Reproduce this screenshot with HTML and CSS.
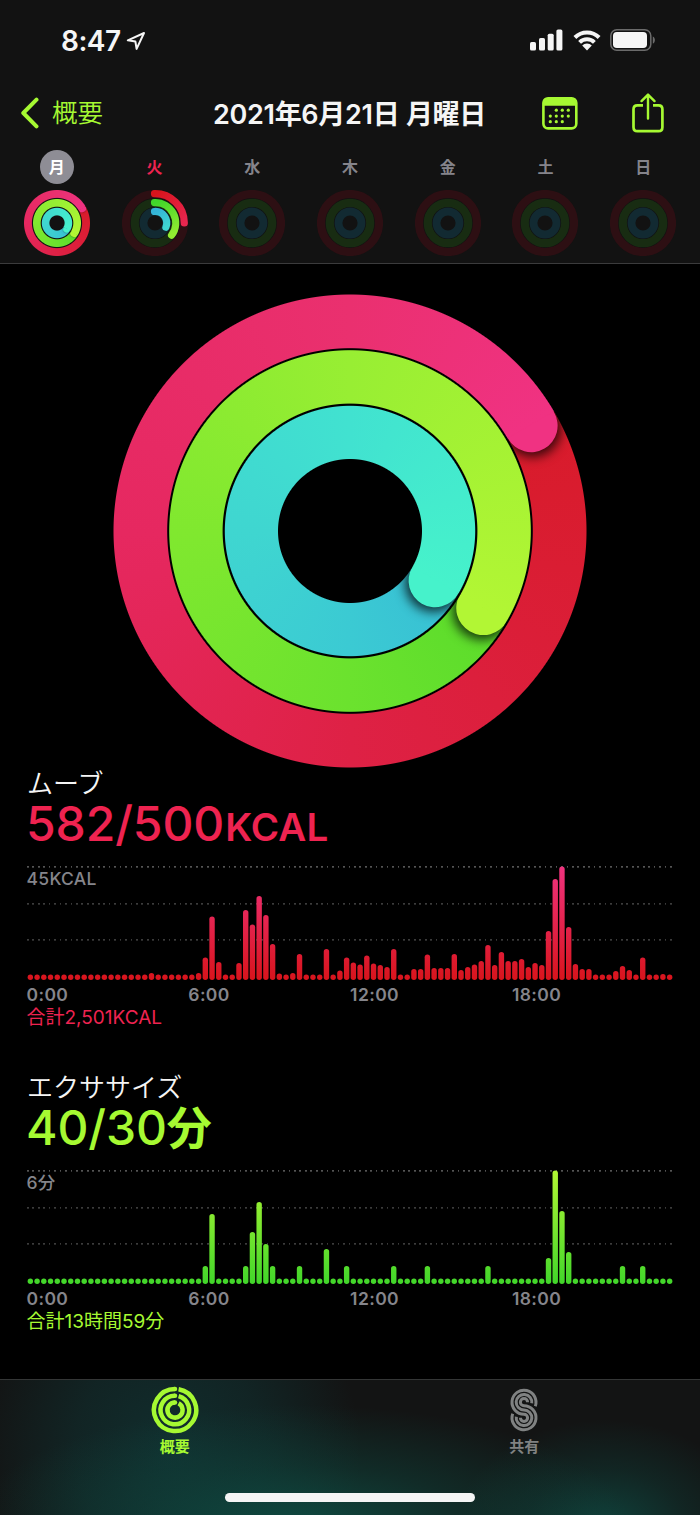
FILE: index.html
```html
<!DOCTYPE html>
<html lang="ja">
  <head>
    <meta charset="UTF-8" />
    <meta name="viewport" content="width=device-width, initial-scale=1.0" />
    <title>アクティビティ</title>
    <link rel="stylesheet" href="styles.css">
  </head>
  <body>
    <header class="header">
      <div class="status-bar">
        <div class="status-time">
          <span>8:47</span>
          <svg width="20" height="20" viewBox="0 0 20 20"><path d="M1.8 9.3 18 2 10.6 17.9 9.4 10.6Z" fill="none" stroke="#f5f5f5" stroke-width="2" stroke-linejoin="round" /></svg>
        </div>
        <div class="status-icons">
          <svg width="33" height="22" viewBox="0 0 33 22" fill="#f5f5f5">
            <rect x="0" y="13" width="6" height="8.5" rx="1.6" />
            <rect x="9" y="9" width="6" height="12.5" rx="1.6" />
            <rect x="17.7" y="4.7" width="6" height="16.8" rx="1.6" />
            <rect x="26.4" y="0.5" width="6" height="21" rx="1.6" />
          </svg>
          <svg class="wifi" width="28" height="22" viewBox="0 0 28 22" fill="none" stroke="#f5f5f5" stroke-width="4">
            <path d="M1.9 8.5A17 17 0 0 1 26.1 8.5" />
            <path d="M6.6 13.3A10.4 10.4 0 0 1 21.4 13.3" />
            <path d="M9.2 16.5A6.8 6.8 0 0 1 18.8 16.5L14 21.4Z" fill="#f5f5f5" stroke="none" />
          </svg>
          <svg width="46" height="22" viewBox="0 0 46 22">
            <rect x="0.8" y="0.8" width="40" height="20.4" rx="6" fill="none" stroke="#6b6b6b" stroke-width="1.5" />
            <rect x="3" y="3" width="34" height="16" rx="3.8" fill="#f5f5f5" />
            <path d="M42.8 7.4C45.6 8.4 45.6 13.6 42.8 14.6Z" fill="#6b6b6b" />
          </svg>
        </div>
      </div>

      <nav class="nav">
        <a class="back">
          <svg width="19" height="32" viewBox="0 0 19 32"><path d="M16.5 2.7 3.3 16 16.5 29.3" fill="none" stroke="#a6f932" stroke-width="4" stroke-linecap="round" stroke-linejoin="round" /></svg>
          <span>概要</span>
        </a>
        <h1>2021年6月21日 月曜日</h1>
        <div class="nav-actions">
          <svg width="36" height="33" viewBox="0 0 36 33" fill="#a6f932">
            <rect x="1.4" y="1.4" width="32.9" height="30" rx="4.6" fill="none" stroke="#a6f932" stroke-width="2.6" />
            <path d="M1 8.8V5Q1 1 5 1H30.7Q34.7 1 34.7 5V8.8Z" />
            <g id="calendarDots"></g>
          </svg>
          <svg width="32" height="40" viewBox="0 0 32 40" fill="none" stroke="#a6f932" stroke-width="2.7" stroke-linecap="round" stroke-linejoin="round">
            <path d="M11 12.3H5.4Q1.5 12.3 1.5 16.2V34.3Q1.5 38.2 5.4 38.2H26.5Q30.4 38.2 30.4 34.3V16.2Q30.4 12.3 26.5 12.3H21" stroke-linecap="butt" />
            <path d="M16 25.5V1.8M9.5 8.1 16 1.6 22.5 8.1" stroke-width="2.4" />
          </svg>
        </div>
      </nav>

      <div class="week">
        <div class="day selected">
          <span class="day-name">月</span>
          <div class="rings rings-small">
            <div class="ring ring-move"><div class="cap"></div></div>
            <div class="ring ring-exercise"><div class="cap"></div></div>
            <div class="ring ring-stand"><div class="cap"></div></div>
          </div>
        </div>
        <div class="day today">
          <span class="day-name">火</span>
          <svg class="day-rings" viewBox="-33 -33 66 66">
            <defs>
              <linearGradient id="moveArc" gradientUnits="userSpaceOnUse" x1="0" y1="-29" x2="29" y2="0"><stop offset="0" stop-color="#d8141c" /><stop offset="1" stop-color="#e8264f" /></linearGradient>
              <linearGradient id="exerciseArc" gradientUnits="userSpaceOnUse" x1="0" y1="-20" x2="16" y2="12"><stop offset="0" stop-color="#41d62a" /><stop offset="1" stop-color="#93ec31" /></linearGradient>
              <linearGradient id="standArc" gradientUnits="userSpaceOnUse" x1="0" y1="-11" x2="11" y2="4"><stop offset="0" stop-color="#34b4d8" /><stop offset="1" stop-color="#3fd5d2" /></linearGradient>
            </defs>
            <use href="#tracks" />
            <g fill="none" stroke-width="7.2" stroke-linecap="round">
              <path d="M-.5-29.3A29.3 29.3 0 0 1 29.3 0" stroke="url(#moveArc)" />
              <path d="M-.5-20.3A20.3 20.3 0 0 1 16.6 12.2" stroke="url(#exerciseArc)" />
              <path d="M-.5-11.5A11.5 11.5 0 0 1 10.9 4.2" stroke="url(#standArc)" />
            </g>
          </svg>
        </div>
        <div class="day"><span class="day-name">水</span>
          <svg class="day-rings" viewBox="-33 -33 66 66">
            <g id="tracks" fill="none">
              <circle r="29" stroke="#2d0f13" stroke-width="8.2" />
              <circle r="20.2" stroke="#182c12" stroke-width="8.2" />
              <circle r="11.5" stroke="#122a32" stroke-width="7.8" />
            </g>
          </svg>
        </div>
        <div class="day"><span class="day-name">木</span><svg class="day-rings" viewBox="-33 -33 66 66"><use href="#tracks" /></svg></div>
        <div class="day"><span class="day-name">金</span><svg class="day-rings" viewBox="-33 -33 66 66"><use href="#tracks" /></svg></div>
        <div class="day"><span class="day-name">土</span><svg class="day-rings" viewBox="-33 -33 66 66"><use href="#tracks" /></svg></div>
        <div class="day"><span class="day-name">日</span><svg class="day-rings" viewBox="-33 -33 66 66"><use href="#tracks" /></svg></div>
      </div>
    </header>

    <main class="content">
      <div class="rings rings-large">
        <div class="ring ring-move"><div class="cap"></div></div>
        <div class="ring ring-exercise"><div class="cap"></div></div>
        <div class="ring ring-stand"><div class="cap"></div></div>
        <svg class="arrows" viewBox="-237 -237 474 474" fill="none" stroke="#060606" stroke-width="4.6" stroke-linecap="round" stroke-linejoin="round">
          <path d="M-13-209.8H13M-.5-225.6 13.3-209.8-.5-194" />
          <path d="M-16.7-154.3H9M-4.5-169.7 9.5-154.3-4.5-139M5.3-169.7 19-154.3 5.3-139" />
          <path d="M0-86V-111M-15.5-98.2 0-111.5 15.5-98.2" />
        </svg>
      </div>

      <section class="metric move">
        <h2>ムーブ</h2>
        <p class="value">582/500<span class="unit">KCAL</span></p>
        <div class="chart">
          <span class="chart-max">45KCAL</span>
          <svg class="bars" viewBox="0 0 646 114">
            <defs>
              <linearGradient id="moveFill" gradientUnits="userSpaceOnUse" x1="0" y1="114" x2="0" y2="0"><stop offset="0" stop-color="#d8141c" /><stop offset="1" stop-color="#f0337f" /></linearGradient>
            </defs>
            <g id="moveBars" fill="url(#moveFill)"></g>
          </svg>
        </div>
        <div class="axis"><span>0:00</span><span>6:00</span><span>12:00</span><span>18:00</span></div>
        <p class="total">合計2,501KCAL</p>
      </section>

      <section class="metric exercise">
        <h2>エクササイズ</h2>
        <p class="value">40/30<span class="unit">分</span></p>
        <div class="chart">
          <span class="chart-max">6分</span>
          <svg class="bars" viewBox="0 0 646 114">
            <defs>
              <linearGradient id="exerciseFill" gradientUnits="userSpaceOnUse" x1="0" y1="114" x2="0" y2="0"><stop offset="0" stop-color="#41d62a" /><stop offset="1" stop-color="#b2f634" /></linearGradient>
            </defs>
            <g id="exerciseBars" fill="url(#exerciseFill)"></g>
          </svg>
        </div>
        <div class="axis"><span>0:00</span><span>6:00</span><span>12:00</span><span>18:00</span></div>
        <p class="total">合計13時間59分</p>
      </section>
    </main>

    <footer class="tab-bar">
      <div class="tabs">
        <a class="tab active">
          <svg width="48" height="48" viewBox="-24 -24 48 48">
            <g fill="none" stroke="#a6f932" stroke-width="4.5">
              <path d="M3.6-20.8A21.1 21.1 0 1 1 0-21.1" />
              <path d="M3.6-13.8A14.3 14.3 0 1 1 0-14.3" />
              <path d="M3.6-6.7A7.6 7.6 0 1 1 0-7.6" />
            </g>
            <g fill="#a6f932">
              <circle cy="-21.1" r="2.25" />
              <circle cy="-14.3" r="2.25" />
              <circle cy="-7.6" r="2.25" />
            </g>
          </svg>
          <span>概要</span>
        </a>
        <a class="tab">
          <svg width="48" height="48" viewBox="-24 -24 48 48" fill="none" stroke="#808282" stroke-width="3">
            <path d="M11.28-3.7A12 12 0 1 0 0 4.2A3.6 3.6 0 1 1-3.6 7.8" />
            <path d="M7.72-6.71A7.8 7.8 0 1 0 0 0A7.8 7.8 0 1 1-7.72 6.71" />
            <path d="M3.6-7.8A3.6 3.6 0 1 0 0-4.2A12 12 0 1 1-11.28 3.7" />
          </svg>
          <span>共有</span>
        </a>
      </div>
      <div class="home-indicator"></div>
    </footer>

    <script>
      // one value per 15 minutes, bar height in px
      const move = [
        5, 5, 5, 5, 5, 5, 5, 5, 5, 5, 5, 5, 5, 5, 5, 5, 5, 5, 7, 5, 5, 5, 5, 5,
        5, 7, 22.5, 63.5, 18, 5, 5, 17, 70, 55.5, 84, 65, 36, 6.5, 5, 7, 26, 5, 5, 5, 31, 5, 9.5, 22.5,
        17.5, 15.5, 24.5, 16.5, 15, 13, 31, 5, 5, 11, 11, 25.5, 12, 12, 12, 26, 10, 13, 15.5, 19, 35, 15, 28, 19,
        19, 21, 13, 17, 15, 49, 101, 113.5, 53, 16, 11, 11, 5, 5, 5, 9, 14, 10, 5, 22.5, 5, 5, 6, 5,
      ];
      const exercise = {
        26: 18, 27: 70, 32: 18, 33: 52, 34: 82, 35: 40, 36: 18, 40: 18, 44: 35, 47: 18,
        54: 18, 59: 18, 68: 18, 77: 26, 78: 113.5, 79: 73, 80: 32, 88: 18, 91: 18,
      };

      function drawBars(id, data) {
        const step = 646 / 96;
        let html = "";
        for (let i = 0; i < 96; i++) {
          const h = Math.max(data[i] || 0, 5.4);
          const x = (step * (i + 0.5) - 2.7).toFixed(2);
          html += `<rect x="${x}" y="${114 - h}" width="5.4" height="${h}" rx="2.7" />`;
        }
        document.getElementById(id).innerHTML = html;
      }

      drawBars("moveBars", move);
      drawBars("exerciseBars", exercise);

      const dots = [[14.3, 13.2], [20.3, 13.2], [26.3, 13.2], [8.3, 19.1], [14.3, 19.1], [20.3, 19.1], [26.3, 19.1], [8.3, 24.7], [14.3, 24.7], [20.3, 24.7]];
      document.getElementById("calendarDots").innerHTML = dots
        .map(([x, y]) => `<circle cx="${x}" cy="${y}" r="1.6" />`)
        .join("");
    </script>
  </body>
</html>
```

FILE: styles.css
```css
* {
  box-sizing: border-box;
}
body {
  margin: 0;
  width: 700px;
  height: 1515px;
  display: flex;
  flex-direction: column;
  overflow: hidden;
  background: #000;
  color: #f5f5f5;
  font-family: Inter, "Noto Sans CJK JP", sans-serif;
}
h1,
h2,
p {
  margin: 0;
}
svg {
  display: block;
  flex: none;
}

/* header */
.header {
  height: 264px;
  background: #121212;
  border-bottom: 1px solid #3b3b3c;
}
.status-bar {
  height: 80px;
  padding: 0 44px 0 61px;
  display: flex;
  align-items: center;
  justify-content: space-between;
}
.status-time {
  display: flex;
  align-items: center;
  gap: 5px;
  font-size: 28px;
  font-weight: 600;
  line-height: 34px;
  padding-top: 1px;
  letter-spacing: -0.5px;
}
.status-icons {
  display: flex;
  align-items: center;
  gap: 9.5px;
}
.nav {
  height: 66px;
  padding: 0 36px 0 20px;
  display: grid;
  grid-template-columns: 137px 1fr 122px;
  align-items: center;
}
.back {
  display: flex;
  align-items: center;
  gap: 13px;
  color: #a6f932;
  font-size: 25.5px;
  font-weight: 350;
  line-height: 34px;
}
.nav h1 {
  padding-top: 3px;
  font-size: 27px;
  font-weight: 600;
  line-height: 40px;
  letter-spacing: -0.3px;
  text-align: center;
  white-space: nowrap;
}
.nav-actions {
  display: flex;
  align-items: center;
  justify-content: space-between;
}
.week {
  padding: 4px 8px 0;
  display: grid;
  grid-template-columns: repeat(7, 1fr);
}
.day {
  display: flex;
  flex-direction: column;
  align-items: center;
  gap: 6px;
}
.day-name {
  width: 34px;
  height: 34px;
  border-radius: 50%;
  color: #85848b;
  font-size: 16px;
  font-weight: 600;
  line-height: 34px;
  text-align: center;
}
.selected .day-name {
  background: #8e8d95;
  color: #fff;
}
.today .day-name {
  color: #ee2350;
}
.day-rings {
  width: 66px;
  height: 66px;
}

/* rings: --out and --in are the radii, --end the angle of the head */
.rings {
  display: grid;
}
.rings > * {
  grid-area: 1 / 1;
}
.ring {
  --shape: radial-gradient(circle, transparent calc(var(--in) - 0.5px), #000 calc(var(--in) + 0.5px), #000 calc(var(--out) - 0.5px), transparent calc(var(--out) + 0.5px));
  -webkit-mask: var(--shape);
  mask: var(--shape);
}
.ring-move {
  --end: 59.7deg;
  --head: #f03282;
  background: conic-gradient(from 59.7deg, #d81b2a, #de2145 120deg, #e62860 210deg, #ea306f 300deg, #f03282);
}
.ring-exercise {
  --end: 120deg;
  --head: #b2f634;
  background: conic-gradient(from 120deg, #5bdc2b, #6be22e 60deg, #80e82f 150deg, #98ee33 240deg, #b2f634);
}
.ring-stand {
  --end: 120deg;
  --head: #46f2cb;
  background: conic-gradient(from 120deg, #38bfd4, #3bcad3 60deg, #3fd6d0 150deg, #41e2d0 240deg, #46f2cb);
}
.cap {
  height: 100%;
  padding-top: calc(50% - var(--out));
  display: flex;
  justify-content: center;
  align-items: flex-start;
  transform: rotate(var(--end));
  clip-path: inset(0 0 0 49.9%);
}
.cap::before {
  content: "";
  width: calc(var(--out) - var(--in));
  height: calc(var(--out) - var(--in));
  border-radius: 50%;
  background: var(--head);
  box-shadow: var(--shadow);
}
.rings-large {
  --shadow: 3px 0 11px 2px rgba(0, 0, 0, 0.75);
  width: 474px;
  height: 474px;
}
.rings-large .ring-move {
  --out: 236.5px;
  --in: 182.8px;
}
.rings-large .ring-exercise {
  --out: 180.8px;
  --in: 127.4px;
}
.rings-large .ring-stand {
  --out: 125.2px;
  --in: 72px;
}
.rings-small {
  --shadow: 0 0 2px rgba(0, 0, 0, 0.5);
  width: 66px;
  height: 66px;
}
.rings-small .ring-move {
  --out: 33px;
  --in: 25.1px;
}
.rings-small .ring-exercise {
  --out: 24px;
  --in: 16.3px;
}
.rings-small .ring-stand {
  --out: 15.2px;
  --in: 7.6px;
}
.arrows {
  width: 474px;
  height: 474px;
}

/* metrics */
.content {
  height: 1115px;
  padding-top: 30px;
  display: flex;
  flex-direction: column;
  align-items: center;
}
.metric {
  width: 646px;
  height: 304px;
  flex: none;
}
.metric h2 {
  height: 30px;
  font-size: 26px;
  font-weight: 350;
  line-height: 32px;
}
.value {
  height: 68px;
  margin-left: -1px;
  font-size: 48px;
  font-weight: 550;
  line-height: 52px;
  letter-spacing: -0.1px;
}
.move .unit {
  margin-left: 1px;
  font-size: 38.5px;
  font-weight: 600;
  letter-spacing: 0.1px;
}
.exercise .unit {
  font-size: 45px;
  font-weight: 600;
}
.chart {
  height: 114px;
  background:
    repeating-linear-gradient(90deg, #555 0 1.7px, transparent 1.7px 5.45px) 0 0 / 100% 1.7px no-repeat,
    repeating-linear-gradient(90deg, #3c3c3c 0 1.7px, transparent 1.7px 5.45px) 0 36.5px / 100% 1.7px no-repeat,
    repeating-linear-gradient(90deg, #3c3c3c 0 1.7px, transparent 1.7px 5.45px) 0 73px / 100% 1.7px no-repeat;
}
.chart-max {
  display: block;
  height: 0;
  margin-left: -0.5px;
  color: #85858b;
  font-size: 17.5px;
  font-weight: 550;
  line-height: 25px;
  letter-spacing: 0.3px;
}
.bars {
  width: 646px;
  height: 114px;
}
.axis {
  height: 26px;
  margin-left: -0.5px;
  display: grid;
  grid-template-columns: repeat(4, 161.8px);
  color: #85858b;
  font-size: 17.5px;
  font-weight: 600;
  line-height: 30px;
  letter-spacing: 0.4px;
}
.total {
  margin-left: -0.5px;
  font-size: 19px;
  line-height: 24px;
}
.move .value,
.move .total {
  color: #ee2350;
}
.exercise .value,
.exercise .total {
  color: #a6f932;
}

/* tab bar */
.tab-bar {
  height: 136px;
  border-top: 1px solid #343636;
  display: flex;
  flex-direction: column;
  align-items: center;
  background:
    radial-gradient(ellipse 330px 120px at 300px 145px, rgba(14, 78, 68, 0.9), rgba(14, 78, 68, 0.4) 50%, transparent),
    radial-gradient(ellipse 150px 110px at 605px 150px, rgba(14, 78, 70, 0.8), rgba(14, 78, 70, 0.3) 55%, transparent),
    radial-gradient(ellipse 190px 200px at 170px 70px, rgba(16, 52, 52, 0.8), rgba(16, 52, 52, 0.5) 50%, transparent),
    #131414;
}
.tabs {
  width: 100%;
  height: 113px;
  padding: 6px 1px 0 0;
  display: grid;
  grid-template-columns: 1fr 1fr;
}
.tab {
  display: flex;
  flex-direction: column;
  align-items: center;
  color: #808282;
  font-size: 15px;
  font-weight: 700;
  line-height: 26px;
}
.tab.active {
  color: #a6f932;
}
.home-indicator {
  width: 250px;
  height: 9px;
  border-radius: 5px;
  background: #f5f5f5;
}
```
